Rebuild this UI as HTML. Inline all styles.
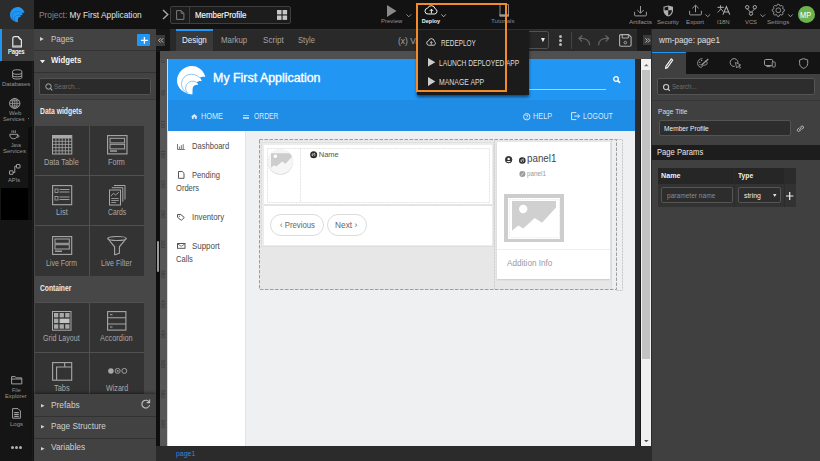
<!DOCTYPE html>
<html><head><meta charset="utf-8">
<style>
*{box-sizing:border-box;margin:0;padding:0}
html,body{width:820px;height:461px;overflow:hidden;background:#121212;font-family:"Liberation Sans",sans-serif;position:relative}
.a{position:absolute}
.t{position:absolute;white-space:nowrap;line-height:1;transform-origin:0 0}
svg{position:absolute;overflow:visible}
</style></head><body>
<div class="a" style="left:0px;top:0px;width:820px;height:29px;background:#121212;"></div>
<div class="a" style="left:0px;top:0px;width:34px;height:29px;background:#2c2c2c;"></div>
<svg style="left:9.5px;top:6.75px;" width="14.5" height="15.25"><g transform="scale(0.512,0.535)"><path d="M15.4 28.5 C7 28 0 22 0 15 C0 7 6.5 0 15 0 C21.5 0 27 5 28.3 10.9 C26 10.3 23.8 10.8 22.8 11.7 C23.8 12.6 24.5 13.8 24.8 15.2 C23 14.6 20.8 15.2 19.7 16.4 C20.4 17 21 17.8 21.25 18.75 C18.5 18.4 16.3 19.6 15.8 21.5 C15.4 23.5 15.6 26 15.4 28.5 Z" fill="#2196f3"/><path d="M22.8 11.7 C16 5 6 8 4.5 16 C4 21 6.5 25 10.3 27.3 M19.7 16.4 C15 13 9.5 16 8.5 21 C8.2 24 9.5 26 10.7 27" stroke="#1565c0" stroke-width="1.2" fill="none" opacity=".8"/></g></svg>
<div class="t" style="left:39.28px;top:11px;font-size:8.80px;color:#888;transform:scaleX(0.946);">Project: <span style="color:#e2e2e2">My First Application</span></div>
<svg style="left:162px;top:9px;" width="7" height="11"><path d="M1 1 L5.8 5.5 L1 10" stroke="#a8a8a8" stroke-width="1.4" fill="none"/></svg>
<div class="a" style="left:170.3px;top:6.3px;width:120.7px;height:17.6px;background:#1c1c1c;border:1px solid #3f3f3f;border-radius:2px"></div>
<div class="a" style="left:189.4px;top:6.8px;width:1px;height:16.6px;background:#3f3f3f;"></div>
<svg style="left:176.2px;top:9.9px;" width="8.5" height="10"><path d="M0.6 0.6 H5.2 L7.9 3.3 V9.4 H0.6 Z M5.2 0.6 V3.3 H7.9" stroke="#7a7a7a" stroke-width="1" fill="none"/></svg>
<div class="t" style="left:195.11px;top:11px;font-size:8.80px;color:#f4f4f4;transform:scaleX(0.897);-webkit-text-stroke:0.15px #fff;">MemberProfile</div>
<svg style="left:276.6px;top:10.2px;" width="10.2" height="10"><rect x="0" y="0" width="4.5" height="4.4" fill="#c8c8c8"/><rect x="5.6" y="0" width="4.5" height="4.4" fill="#c8c8c8"/><rect x="0" y="5.5" width="4.5" height="4.4" fill="#c8c8c8"/><rect x="5.6" y="5.5" width="4.5" height="4.4" fill="#c8c8c8"/></svg>
<svg style="left:386.7px;top:4.6px;" width="9.5" height="12"><path d="M0 0 L9.5 6 L0 12 Z" fill="#8a8a8a"/></svg>
<div class="t" style="left:380.70px;top:19px;font-size:5.50px;color:#929292;transform:scaleX(1.089);">Preview</div>
<svg style="left:406px;top:14.2px;" width="5.6" height="3.2"><path d="M0.4 0.4 L2.8 2.8 L5.2 0.4" stroke="#9a9a9a" stroke-width="0.9" fill="none"/></svg>
<svg style="left:424.9px;top:5.3px;" width="12.8" height="9.5" viewBox="0 0 12.8 9.5"><path d="M3.2 9 H9.8 A2.7 2.7 0 0 0 10.2 3.8 A4 4 0 0 0 2.6 3.2 A2.9 2.9 0 0 0 3.2 9 Z" stroke="#f2f2f2" stroke-width="1" fill="none"/><path d="M6.4 8.3 V4.3 M4.8 5.9 L6.4 4.2 L8 5.9" stroke="#f2f2f2" stroke-width="1" fill="none"/></svg>
<div class="t" style="left:421.83px;top:19px;font-size:5.50px;color:#f4f4f4;font-weight:bold;">Deploy</div>
<svg style="left:440.5px;top:14.2px;" width="5.2" height="3.2"><path d="M0.4 0.4 L2.6 2.8 L4.8 0.4" stroke="#bbb" stroke-width="0.9" fill="none"/></svg>
<svg style="left:498.7px;top:3.9px;" width="10" height="12.5"><path d="M1 0.5 H9.5 V12 H1 Z" stroke="#8a8a8a" stroke-width="1" fill="none"/><rect x="0.5" y="10.3" width="9.5" height="2.2" fill="#9a9a9a"/></svg>
<div class="t" style="left:491.39px;top:19px;font-size:5.50px;color:#858585;transform:scaleX(1.130);">Tutorials</div>
<svg style="left:634px;top:5.5px;" width="13" height="10.5"><path d="M6.5 0 V7 M3.3 4 L6.5 7.2 L9.7 4" stroke="#999" stroke-width="1" fill="none"/><path d="M0.6 5.8 V9 Q0.6 9.9 1.5 9.9 H11.5 Q12.4 9.9 12.4 9 V5.8" stroke="#999" stroke-width="1" fill="none"/></svg>
<div class="t" style="left:628.68px;top:20px;font-size:5.50px;color:#959595;transform:scaleX(1.158);">Artifacts</div>
<svg style="left:663px;top:4.5px;" width="10.5" height="12"><path d="M5.25 0.5 L10 1.8 V5.5 C10 8.5 8 10.6 5.25 11.6 C2.5 10.6 0.5 8.5 0.5 5.5 V1.8 Z" fill="#b0b0b0"/><path d="M5.25 1.6 V5.3 H1.5 V2.5 Z M5.25 5.3 H9 C8.8 7.9 7.3 9.6 5.25 10.5 Z" fill="#151515"/></svg>
<div class="t" style="left:656.90px;top:20px;font-size:5.50px;color:#959595;transform:scaleX(1.102);">Security</div>
<svg style="left:689px;top:5.3px;" width="13" height="10.5"><path d="M6.5 7.2 V0.3 M3.3 3.3 L6.5 0.2 L9.7 3.3" stroke="#999" stroke-width="1" fill="none"/><path d="M0.6 5.8 V9 Q0.6 9.9 1.5 9.9 H11.5 Q12.4 9.9 12.4 9 V5.8" stroke="#999" stroke-width="1" fill="none"/></svg>
<div class="t" style="left:686.49px;top:20px;font-size:5.50px;color:#959595;transform:scaleX(1.132);">Export</div>
<svg style="left:704.5px;top:14px;" width="5.5" height="3"><path d="M0.4 0.4 L2.75 2.7 L5.1 0.4" stroke="#a0a0a0" stroke-width="0.9" fill="none"/></svg>
<svg style="left:716.7px;top:5px;" width="13.5" height="10"><path d="M0.5 2.3 H6.8 M3.6 0.3 V3.5 C3.3 5 2 6.5 0.6 7.3 M3.8 3.8 C4.5 5 5.3 5.8 6.3 6.5" stroke="#b0b0b0" stroke-width="1" fill="none"/><path d="M5.9 9.6 L9.4 1.6 L12.8 9.6 M7 7 H11.8" stroke="#b0b0b0" stroke-width="1.1" fill="none"/></svg>
<div class="t" style="left:717.10px;top:20px;font-size:5.50px;color:#959595;transform:scaleX(1.093);">I18N</div>
<svg style="left:745px;top:4.7px;" width="12" height="10.7"><circle cx="2.2" cy="2.2" r="1.7" stroke="#aaa" stroke-width="1" fill="none"/><circle cx="9.8" cy="2.2" r="1.7" stroke="#aaa" stroke-width="1" fill="none"/><circle cx="6" cy="8.6" r="1.7" stroke="#aaa" stroke-width="1" fill="none"/><path d="M2.6 3.9 C3 5.5 4.5 6 5.5 7 M9.4 3.9 C9 5.5 7.5 6 6.5 7" stroke="#aaa" stroke-width="1" fill="none"/></svg>
<div class="t" style="left:744.71px;top:20px;font-size:5.50px;color:#959595;transform:scaleX(1.061);">VCS</div>
<svg style="left:760px;top:13.5px;" width="5.5" height="3.2"><path d="M0.4 0.4 L2.75 2.8 L5.1 0.4" stroke="#a0a0a0" stroke-width="0.9" fill="none"/></svg>
<svg style="left:772.2px;top:4.1px;" width="12.6" height="12.6" viewBox="0 0 12.6 12.6"><path d="M10.55 4.55 L12.35 5.51 L12.35 7.09 L10.55 8.05 L10.55 8.07 L11.14 10.02 L10.02 11.14 L8.07 10.55 L8.05 10.55 L7.09 12.35 L5.51 12.35 L4.55 10.55 L4.53 10.55 L2.58 11.14 L1.46 10.02 L2.05 8.07 L2.05 8.05 L0.25 7.09 L0.25 5.51 L2.05 4.55 L2.05 4.53 L1.46 2.58 L2.58 1.46 L4.53 2.05 L4.55 2.05 L5.51 0.25 L7.09 0.25 L8.05 2.05 L8.07 2.05 L10.02 1.46 L11.14 2.58 L10.55 4.53 Z" stroke="#a0a0a0" stroke-width="0.85" fill="none" stroke-linejoin="round"/><circle cx="6.3" cy="6.3" r="2.4" stroke="#a0a0a0" stroke-width="0.85" fill="none"/></svg>
<div class="t" style="left:767.39px;top:20px;font-size:5.50px;color:#959595;transform:scaleX(1.117);">Settings</div>
<svg style="left:787.6px;top:13.5px;" width="5" height="3.2"><path d="M0.4 0.4 L2.5 2.8 L4.6 0.4" stroke="#a0a0a0" stroke-width="0.9" fill="none"/></svg>
<div class="a" style="left:798.2px;top:6.4px;width:16.9px;height:16.6px;background:#6db24d;border-radius:50%"></div>
<div class="t" style="left:800.43px;top:11px;font-size:8.80px;color:#ffffff;transform:scaleX(0.848);">MP</div>
<div class="a" style="left:0px;top:29px;width:33.5px;height:432px;background:#151515;"></div>
<div class="a" style="left:31.8px;top:61px;width:1.7px;height:400px;background:#1e1e1e;"></div>
<div class="a" style="left:28px;top:127px;width:3.8px;height:93px;background:#0c0c0c;"></div>
<div class="a" style="left:0.5px;top:188px;width:27.5px;height:32px;background:#000;"></div>
<div class="a" style="left:0px;top:29px;width:33.5px;height:32px;background:#3b3b3b;"></div>
<div class="a" style="left:0px;top:29px;width:1.6px;height:32px;background:#2196f3;"></div>
<svg style="left:11.9px;top:36px;" width="10.2" height="11.6"><path d="M0.8 2.6 Q0.8 0.7 2.6 0.7 H6.2 L9.4 3.9 V10.8 H0.8 Z" stroke="#e6e6e6" stroke-width="1.2" fill="none"/><path d="M6.3 0.8 Q6.6 3.6 9.3 3.9" stroke="#e6e6e6" stroke-width="1" fill="none"/><rect x="1.3" y="9.3" width="7.6" height="1.9" fill="#b8b8b8"/></svg>
<div class="t" style="left:8.41px;top:48px;font-size:7.50px;color:#ffffff;transform:scaleX(0.766);-webkit-text-stroke:0.2px #fff;">Pages</div>
<svg style="left:11.8px;top:68.6px;" width="10.4" height="10.8"><path d="M0.6 2.2 C0.6 0.3 9.8 0.3 9.8 2.2 V8.6 C9.8 10.5 0.6 10.5 0.6 8.6 Z M0.6 4.5 C2 5.6 8.4 5.6 9.8 4.5 M0.6 7 C2 8.1 8.4 8.1 9.8 7" stroke="#a0a0a0" stroke-width="1" fill="none"/></svg>
<div class="t" style="left:2.31px;top:82px;font-size:5.50px;color:#959595;transform:scaleX(1.072);">Databases</div>
<svg style="left:9.3px;top:98px;" width="11.5" height="10.8"><ellipse cx="5.75" cy="5.4" rx="5.2" ry="4.9" stroke="#a0a0a0" stroke-width="1" fill="none"/><ellipse cx="5.75" cy="5.4" rx="2.3" ry="4.9" stroke="#a0a0a0" stroke-width="0.9" fill="none"/><path d="M0.6 5.4 H10.9 M1.3 2.8 H10.2 M1.3 8 H10.2 M5.75 0.5 V10.3" stroke="#a0a0a0" stroke-width="0.8" fill="none"/></svg>
<div class="t" style="left:8.60px;top:111px;font-size:5.50px;color:#959595;transform:scaleX(1.097);">Web</div>
<div class="t" style="left:3.32px;top:117px;font-size:5.50px;color:#959595;transform:scaleX(1.019);">Services</div>
<div class="a" style="left:28.3px;top:117.6px;width:1px;height:1px;background:#777;"></div>
<svg style="left:9.3px;top:129.7px;" width="10.8" height="9.3"><path d="M0.8 4.3 H8.6 C8.6 7.3 7 8.8 4.7 8.8 C2.4 8.8 0.8 7.3 0.8 4.3 Z M8.4 5 C10.6 5 10.6 7.5 8 7.3" stroke="#a0a0a0" stroke-width="1" fill="none"/><path d="M3 0.3 V3 M4.7 0.3 V3 M6.4 0.3 V3" stroke="#a0a0a0" stroke-width="0.8" fill="none"/></svg>
<div class="t" style="left:11.26px;top:143px;font-size:5.50px;color:#959595;transform:scaleX(0.861);">Java</div>
<div class="t" style="left:3.30px;top:149px;font-size:5.50px;color:#959595;transform:scaleX(1.086);">Services</div>
<svg style="left:9.3px;top:164.2px;" width="11.5" height="10.8"><rect x="7.5" y="0.5" width="3.5" height="3.5" rx="0.3" stroke="#a0a0a0" stroke-width="1" fill="none"/><rect x="0.5" y="6.8" width="3.5" height="3.5" rx="0.3" stroke="#a0a0a0" stroke-width="1" fill="none"/><path d="M4 8.5 H5.8 V2.2 H7.5" stroke="#a0a0a0" stroke-width="1" fill="none"/></svg>
<div class="t" style="left:8.31px;top:178px;font-size:5.50px;color:#959595;transform:scaleX(1.050);">APIs</div>
<svg style="left:10.8px;top:375.5px;" width="11.4" height="8.5"><path d="M0.6 0.6 H4.2 L5.3 1.9 H10.8 V7.9 H0.6 Z M0.6 3 H10.8" stroke="#a0a0a0" stroke-width="1" fill="none"/></svg>
<div class="t" style="left:11.93px;top:388px;font-size:5.50px;color:#959595;transform:scaleX(0.970);">File</div>
<div class="t" style="left:5.41px;top:394px;font-size:5.50px;color:#959595;transform:scaleX(1.055);">Explorer</div>
<svg style="left:12.2px;top:408px;" width="9" height="10.8"><path d="M0.6 0.6 H6 L8.4 3 V10.2 H0.6 Z" stroke="#a0a0a0" stroke-width="1" fill="none"/><path d="M2.2 4.6 H6.8 M2.2 6.5 H6.8 M2.2 8.4 H6.8" stroke="#a0a0a0" stroke-width="1.1"/></svg>
<div class="t" style="left:9.70px;top:422px;font-size:5.50px;color:#959595;transform:scaleX(1.090);">Logs</div>
<div class="a" style="left:11.3px;top:445.8px;width:3.1px;height:3.1px;background:#b0b0b0;border-radius:50%"></div>
<div class="a" style="left:15.3px;top:445.8px;width:3.1px;height:3.1px;background:#b0b0b0;border-radius:50%"></div>
<div class="a" style="left:19.3px;top:445.8px;width:3.1px;height:3.1px;background:#b0b0b0;border-radius:50%"></div>
<div class="a" style="left:33.5px;top:29px;width:122.5px;height:432px;background:#424242;"></div>
<div class="a" style="left:33.5px;top:49.6px;width:122.5px;height:1px;background:#323232;"></div>
<div class="a" style="left:33.5px;top:71.6px;width:122.5px;height:1px;background:#323232;"></div>
<svg style="left:40.3px;top:37.4px;" width="4" height="4"><path d="M0 0 L3.8 2 L0 4 Z" fill="#d0d0d0"/></svg>
<div class="t" style="left:51.20px;top:35px;font-size:8.80px;color:#c8c8c8;transform:scaleX(0.906);">Pages</div>
<div class="a" style="left:137.1px;top:33.6px;width:13.1px;height:12.4px;background:#2196f3;border-radius:1px"></div>
<svg style="left:140.5px;top:36.7px;" width="6.8" height="6.8"><path d="M3.4 0 V6.8 M0 3.4 H6.8" stroke="#fff" stroke-width="1.3"/></svg>
<svg style="left:40px;top:60px;" width="5" height="3.2"><path d="M0 0 H5 L2.5 3.2 Z" fill="#f0f0f0"/></svg>
<div class="t" style="left:50.81px;top:56px;font-size:8.80px;color:#f4f4f4;font-weight:bold;transform:scaleX(0.887);">Widgets</div>
<div class="a" style="left:39px;top:78.2px;width:112px;height:16.4px;background:#2b2b2b;border:1px solid #525252;border-radius:2px"></div>
<svg style="left:45.2px;top:82.6px;" width="8" height="8"><circle cx="3.5" cy="3.5" r="2.7" stroke="#b0b0b0" stroke-width="1" fill="none"/><path d="M5.4 5.4 L7.3 7.3" stroke="#b0b0b0" stroke-width="1.1"/></svg>
<div class="t" style="left:54.28px;top:83px;font-size:7.50px;color:#6e6e6e;transform:scaleX(0.866);">Search...</div>
<div class="a" style="left:33.5px;top:98.5px;width:122.5px;height:295px;background:#474747;"></div>
<div class="a" style="left:33.5px;top:98.5px;width:122.5px;height:0.8px;background:#383838;"></div>
<div class="t" style="left:39.86px;top:107px;font-size:8.80px;color:#ececec;font-weight:bold;transform:scaleX(0.774);">Data widgets</div>
<div class="t" style="left:40.06px;top:284px;font-size:8.80px;color:#ececec;font-weight:bold;transform:scaleX(0.762);">Container</div>
<div class="a" style="left:34.8px;top:125.6px;width:109.4px;height:150.5px;background:#505050;"></div>
<div class="a" style="left:35px;top:126px;width:54.2px;height:49.4px;background:#333333;"></div>
<div class="a" style="left:90px;top:126px;width:54.2px;height:49.4px;background:#333333;"></div>
<div class="a" style="left:35px;top:176.4px;width:54.2px;height:49px;background:#333333;"></div>
<div class="a" style="left:90px;top:176.4px;width:54.2px;height:49px;background:#333333;"></div>
<div class="a" style="left:35px;top:226.4px;width:54.2px;height:49.5px;background:#333333;"></div>
<div class="a" style="left:90px;top:226.4px;width:54.2px;height:49.5px;background:#333333;"></div>
<div class="a" style="left:34.8px;top:302px;width:109.4px;height:91.5px;background:#505050;"></div>
<div class="a" style="left:35px;top:302.5px;width:54.2px;height:49.6px;background:#333333;"></div>
<div class="a" style="left:90px;top:302.5px;width:54.2px;height:49.6px;background:#333333;"></div>
<div class="a" style="left:35px;top:353px;width:54.2px;height:40.5px;background:#333333;"></div>
<div class="a" style="left:90px;top:353px;width:54.2px;height:40.5px;background:#333333;"></div>
<svg style="left:52px;top:134.5px;" width="20.3" height="19.5"><rect x="0.5" y="0.5" width="19.3" height="18.5" stroke="#a8a8a8" stroke-width="1" fill="none"/><rect x="0.5" y="0.5" width="19.3" height="3" fill="#a8a8a8"/><path d="M3.9 3 V19 M7.1 3 V19 M10.2 3 V19 M13.4 3 V19 M16.6 3 V19 M0.5 6.3 H19.8 M0.5 9.4 H19.8 M0.5 12.6 H19.8 M0.5 15.8 H19.8" stroke="#a8a8a8" stroke-width="0.8"/></svg>
<div class="t" style="left:44.34px;top:158px;font-size:8.80px;color:#a8a8a8;transform:scaleX(0.828);">Data Table</div>
<svg style="left:106.7px;top:134.5px;" width="20.6" height="19.5"><rect x="0.6" y="0.6" width="19.4" height="18.3" stroke="#a8a8a8" stroke-width="1.1" fill="none"/><rect x="3" y="3.3" width="14.6" height="4.6" stroke="#a8a8a8" stroke-width="1" fill="none"/><rect x="3" y="9.3" width="14.6" height="4.6" stroke="#a8a8a8" stroke-width="1" fill="none"/><rect x="3" y="15.3" width="7" height="1.4" fill="#a8a8a8"/></svg>
<div class="t" style="left:108.04px;top:158px;font-size:8.80px;color:#a8a8a8;transform:scaleX(0.823);">Form</div>
<svg style="left:52px;top:184.7px;" width="20.3" height="20.3"><rect x="0.6" y="0.6" width="19.1" height="19.1" stroke="#a8a8a8" stroke-width="1.1" fill="none"/><rect x="3" y="4" width="3" height="3.5" stroke="#a8a8a8" stroke-width="0.8" fill="none"/><rect x="3" y="11.5" width="3" height="3.5" stroke="#a8a8a8" stroke-width="0.8" fill="none"/><path d="M7.5 4.5 H17.5 M7.5 7 H17.5 M7.5 12 H17.5 M7.5 14.5 H17.5" stroke="#a8a8a8" stroke-width="0.9"/></svg>
<div class="t" style="left:55.82px;top:208px;font-size:8.80px;color:#a8a8a8;transform:scaleX(0.862);">List</div>
<svg style="left:109px;top:184.7px;" width="16.5" height="20.5"><path d="M5 0.5 H16 V14.5" stroke="#a8a8a8" stroke-width="1" fill="none"/><path d="M2.8 2.7 H13.8 V16.7" stroke="#a8a8a8" stroke-width="1" fill="none"/><rect x="0.5" y="5" width="11" height="15" stroke="#a8a8a8" stroke-width="1" fill="none"/><path d="M2 11 L4.5 8.3 L6.5 10 L9.8 7.3" stroke="#a8a8a8" stroke-width="0.9" fill="none"/><path d="M2.3 13.5 H9.7 M2.3 15.5 H9.7 M2.3 17.5 H7" stroke="#a8a8a8" stroke-width="0.8"/></svg>
<div class="t" style="left:107.76px;top:208px;font-size:8.80px;color:#a8a8a8;transform:scaleX(0.780);">Cards</div>
<svg style="left:52px;top:235.7px;" width="20.3" height="19"><rect x="0.6" y="0.6" width="19.1" height="17.8" stroke="#a8a8a8" stroke-width="1.1" fill="none"/><rect x="3" y="3" width="14.3" height="4.3" stroke="#a8a8a8" stroke-width="1" fill="none"/><rect x="3" y="8.7" width="14.3" height="4.3" stroke="#a8a8a8" stroke-width="1" fill="none"/><rect x="3" y="14.5" width="7" height="1.4" fill="#a8a8a8"/></svg>
<div class="t" style="left:46.05px;top:259px;font-size:8.80px;color:#a8a8a8;transform:scaleX(0.792);">Live Form</div>
<svg style="left:107px;top:235.7px;" width="20" height="19.3"><ellipse cx="10" cy="2.5" rx="9.3" ry="2" stroke="#a8a8a8" stroke-width="1.1" fill="none"/><path d="M0.7 2.5 L7.6 10.8 V18.6 C9 18.8 10 18.3 12.4 17.2 V10.8 L19.3 2.5" stroke="#a8a8a8" stroke-width="1.1" fill="none"/></svg>
<div class="t" style="left:100.94px;top:259px;font-size:8.80px;color:#a8a8a8;transform:scaleX(0.807);">Live Filter</div>
<svg style="left:52.2px;top:311px;" width="19.5" height="19.7"><rect x="0.5" y="0.5" width="18.5" height="18.7" stroke="#a8a8a8" stroke-width="1" fill="none"/><rect x="2" y="2" width="4.3" height="4.4" fill="#a8a8a8"/><rect x="7.6" y="2" width="4.3" height="4.4" fill="#a8a8a8"/><rect x="13.2" y="2" width="4.3" height="4.4" fill="#a8a8a8"/><rect x="2" y="7.65" width="4.3" height="4.4" fill="#a8a8a8"/><rect x="7.6" y="7.65" width="9.9" height="4.4" fill="#c4c4c4"/><rect x="2" y="13.3" width="4.3" height="4.4" fill="#a8a8a8"/><rect x="7.6" y="13.3" width="4.3" height="4.4" fill="#a8a8a8"/><rect x="13.2" y="13.3" width="4.3" height="4.4" fill="#a8a8a8"/></svg>
<div class="t" style="left:43.15px;top:334px;font-size:8.80px;color:#a8a8a8;transform:scaleX(0.807);">Grid Layout</div>
<svg style="left:107px;top:311px;" width="19.5" height="19.7"><rect x="0.6" y="0.6" width="18.3" height="18.5" stroke="#a8a8a8" stroke-width="1.1" fill="none"/><path d="M0.6 6.8 H18.9 M0.6 13 H18.9" stroke="#a8a8a8" stroke-width="1.1"/><path d="M3 3.7 H5.5 M3 16 H5.5" stroke="#a8a8a8" stroke-width="1"/></svg>
<div class="t" style="left:100.13px;top:334px;font-size:8.80px;color:#a8a8a8;transform:scaleX(0.836);">Accordion</div>
<svg style="left:51.7px;top:362px;" width="20.3" height="18.8"><rect x="0.6" y="0.6" width="19.1" height="17.6" stroke="#a8a8a8" stroke-width="1.1" fill="none"/><path d="M4.6 18 V5 H19.7 M12.7 0.6 V5" stroke="#a8a8a8" stroke-width="1.1" fill="none"/></svg>
<div class="t" style="left:53.63px;top:384px;font-size:8.80px;color:#a8a8a8;transform:scaleX(0.845);">Tabs</div>
<svg style="left:107.5px;top:368px;" width="19.3" height="5.8"><circle cx="2.9" cy="2.9" r="2.75" fill="#a8a8a8"/><circle cx="9.65" cy="2.9" r="2.5" stroke="#a8a8a8" stroke-width="0.9" fill="none"/><circle cx="9.65" cy="2.9" r="0.9" fill="#a8a8a8"/><circle cx="16.3" cy="2.9" r="2.5" stroke="#a8a8a8" stroke-width="0.9" fill="none"/></svg>
<div class="t" style="left:105.64px;top:384px;font-size:8.80px;color:#a8a8a8;transform:scaleX(0.811);">Wizard</div>
<div class="a" style="left:33.5px;top:393.5px;width:122.5px;height:67.5px;background:#424242;box-shadow:0 -1px 3px rgba(0,0,0,.45)"></div>
<div class="a" style="left:33.5px;top:415.5px;width:122.5px;height:1px;background:#323232;"></div>
<div class="a" style="left:33.5px;top:437.8px;width:122.5px;height:1px;background:#323232;"></div>
<svg style="left:40.9px;top:403.8px;" width="3.6" height="3.4"><path d="M0 0 L3.6 1.7 L0 3.4 Z" fill="#d0d0d0"/></svg>
<svg style="left:40.9px;top:425.3px;" width="3.6" height="3.4"><path d="M0 0 L3.6 1.7 L0 3.4 Z" fill="#d0d0d0"/></svg>
<svg style="left:40.9px;top:447px;" width="3.6" height="3.4"><path d="M0 0 L3.6 1.7 L0 3.4 Z" fill="#d0d0d0"/></svg>
<div class="t" style="left:51.28px;top:401px;font-size:8.80px;color:#d0d0d0;transform:scaleX(0.950);">Prefabs</div>
<svg style="left:141px;top:399px;" width="9.5" height="9.5"><path d="M8.3 3.4 A3.9 3.9 0 1 0 8.6 6" stroke="#c0c0c0" stroke-width="1.1" fill="none"/><path d="M8.6 0.6 V3.6 H5.7" stroke="#c0c0c0" stroke-width="1.1" fill="none"/></svg>
<div class="t" style="left:51.29px;top:422px;font-size:8.80px;color:#d0d0d0;transform:scaleX(0.934);">Page Structure</div>
<div class="t" style="left:51.28px;top:443px;font-size:8.80px;color:#d0d0d0;transform:scaleX(0.946);">Variables</div>
<div class="a" style="left:156px;top:29px;width:496.5px;height:432px;background:#1c1c1c;"></div>
<div class="a" style="left:156px;top:51px;width:4px;height:395px;background:#0e0e0e;"></div>
<div class="a" style="left:156.9px;top:241px;width:2.4px;height:31px;background:#9a9a9a;border-radius:1px"></div>
<div class="a" style="left:156px;top:29px;width:14px;height:22.5px;background:#161616;"></div>
<div class="a" style="left:156.3px;top:34.8px;width:8.9px;height:11.3px;background:#3a3a3a;"></div>
<svg style="left:157.6px;top:38.2px;" width="5.4" height="4.8"><path d="M2.5 0.3 L0.5 2.4 L2.5 4.5 M5.1 0.3 L3.1 2.4 L5.1 4.5" stroke="#c8c8c8" stroke-width="0.9" fill="none"/></svg>
<div class="a" style="left:170px;top:29px;width:467px;height:21.5px;background:#292929;"></div>
<div class="a" style="left:170px;top:29px;width:467px;height:1px;background:#313131;"></div>
<div class="a" style="left:176.4px;top:29px;width:37px;height:21.5px;background:#393939;"></div>
<div class="a" style="left:176.4px;top:29px;width:37px;height:1.6px;background:#2196f3;"></div>
<div class="t" style="left:182.40px;top:36px;font-size:8.80px;color:#f2f2f2;transform:scaleX(0.905);">Design</div>
<div class="t" style="left:221.41px;top:36px;font-size:8.80px;color:#a4a4a4;transform:scaleX(0.893);">Markup</div>
<div class="t" style="left:262.60px;top:36px;font-size:8.80px;color:#a4a4a4;transform:scaleX(0.920);">Script</div>
<div class="t" style="left:298.12px;top:36px;font-size:8.80px;color:#a4a4a4;transform:scaleX(0.864);">Style</div>
<div class="t" style="left:397.78px;top:37px;font-size:8.80px;color:#a4a4a4;transform:scaleX(0.960);">(x) Variables</div>
<div class="a" style="left:445px;top:31.2px;width:103.9px;height:17.9px;background:#282828;border:1px solid #525252;border-radius:2.5px"></div>
<svg style="left:540.7px;top:37.8px;" width="3.9" height="4.3"><path d="M0 0 H3.9 L1.95 4.3 Z" fill="#eee"/></svg>
<div class="a" style="left:558.7px;top:34.5px;width:3px;height:3px;background:#b8b8b8;border-radius:50%"></div>
<div class="a" style="left:558.7px;top:38.9px;width:3px;height:3px;background:#b8b8b8;border-radius:50%"></div>
<div class="a" style="left:558.7px;top:43px;width:3px;height:3px;background:#b8b8b8;border-radius:50%"></div>
<div class="a" style="left:571.2px;top:32.2px;width:1px;height:17px;background:#444;"></div>
<svg style="left:576.7px;top:35.3px;" width="13.3" height="10.2"><path d="M12.6 10.2 C12.6 5.5 9.5 3 2.5 3.4 M5.3 0.5 L2 3.4 L5 6.6" stroke="#666" stroke-width="1.2" fill="none"/></svg>
<svg style="left:598.3px;top:35.3px;" width="12.7" height="10.2"><path d="M0.6 10.2 C0.6 5.5 3.7 3 10.2 3.4 M7.4 0.5 L10.7 3.4 L7.7 6.6" stroke="#666" stroke-width="1.2" fill="none"/></svg>
<svg style="left:619.2px;top:34px;" width="12.7" height="12.8"><path d="M0.6 1.8 Q0.6 0.6 1.8 0.6 H9.6 L12.1 3.1 V11 Q12.1 12.2 10.9 12.2 H1.8 Q0.6 12.2 0.6 11 Z" stroke="#b0b0b0" stroke-width="1.1" fill="none"/><path d="M3.2 0.6 V4 H9.3 V0.6" stroke="#b0b0b0" stroke-width="1" fill="none"/><circle cx="6.35" cy="8.6" r="1.3" stroke="#b0b0b0" stroke-width="0.9" fill="none"/></svg>
<div class="a" style="left:637px;top:29px;width:15.8px;height:22px;background:#1b1b1b;"></div>
<div class="a" style="left:643px;top:34.7px;width:8px;height:10.8px;background:#3a3a3a;"></div>
<svg style="left:644.6px;top:37.8px;" width="5" height="4.8"><path d="M0.4 0.3 L2.3 2.4 L0.4 4.5 M2.9 0.3 L4.8 2.4 L2.9 4.5" stroke="#c8c8c8" stroke-width="0.9" fill="none"/></svg>
<div class="a" style="left:159.7px;top:51.2px;width:492.8px;height:8px;background:#4f4f4f;"></div>
<div class="a" style="left:160px;top:59px;width:6.8px;height:387px;background:#575757;"></div>
<div class="t" style="left:164px;top:60.2px;font-size:4.8px;color:#333;transform:rotate(90deg);transform-origin:0 0">0</div>
<div class="t" style="left:164px;top:90.2px;font-size:4.8px;color:#333;transform:rotate(90deg);transform-origin:0 0">50</div>
<div class="t" style="left:164px;top:120.2px;font-size:4.8px;color:#333;transform:rotate(90deg);transform-origin:0 0">100</div>
<div class="t" style="left:164px;top:150.2px;font-size:4.8px;color:#333;transform:rotate(90deg);transform-origin:0 0">150</div>
<div class="t" style="left:164px;top:180.2px;font-size:4.8px;color:#333;transform:rotate(90deg);transform-origin:0 0">200</div>
<div class="t" style="left:164px;top:210.2px;font-size:4.8px;color:#333;transform:rotate(90deg);transform-origin:0 0">250</div>
<div class="t" style="left:164px;top:240.2px;font-size:4.8px;color:#333;transform:rotate(90deg);transform-origin:0 0">300</div>
<div class="t" style="left:164px;top:270.2px;font-size:4.8px;color:#333;transform:rotate(90deg);transform-origin:0 0">350</div>
<div class="t" style="left:164px;top:300.2px;font-size:4.8px;color:#333;transform:rotate(90deg);transform-origin:0 0">400</div>
<div class="t" style="left:164px;top:330.2px;font-size:4.8px;color:#333;transform:rotate(90deg);transform-origin:0 0">450</div>
<div class="t" style="left:164px;top:360.2px;font-size:4.8px;color:#333;transform:rotate(90deg);transform-origin:0 0">500</div>
<div class="t" style="left:164px;top:390.2px;font-size:4.8px;color:#333;transform:rotate(90deg);transform-origin:0 0">550</div>
<div class="t" style="left:164px;top:420.2px;font-size:4.8px;color:#333;transform:rotate(90deg);transform-origin:0 0">600</div>
<div class="a" style="left:635.3px;top:59px;width:5.2px;height:387px;background:#2c2c2c;"></div>
<div class="a" style="left:640.5px;top:59px;width:10.5px;height:387px;background:#f1f1f1;"></div>
<div class="a" style="left:650.8px;top:29px;width:1px;height:432px;background:#2a2a2a;"></div>
<div class="a" style="left:641.8px;top:70px;width:8.4px;height:289px;background:#c3c3c3;"></div>
<svg style="left:643.5px;top:63.6px;" width="4.6" height="2.3"><path d="M0 2.3 H4.6 L2.3 0 Z" fill="#707070"/></svg>
<svg style="left:643.5px;top:439.5px;" width="4.6" height="2.3"><path d="M0 0 H4.6 L2.3 2.3 Z" fill="#505050"/></svg>
<div class="a" style="left:166.8px;top:59.2px;width:468.5px;height:386.8px;background:#eff0f2;"></div>
<div class="a" style="left:166.8px;top:59.2px;width:1.2px;height:386.8px;background:#d9d9d9;"></div>
<div class="a" style="left:168px;top:59.2px;width:467.3px;height:40.6px;background:#2196f3;"></div>
<div class="a" style="left:168px;top:99.8px;width:467.3px;height:31.6px;background:#1f8ce6;"></div>
<div class="a" style="left:168px;top:131.4px;width:77.3px;height:314.6px;background:#ffffff;"></div>
<div class="a" style="left:245.3px;top:131.4px;width:1px;height:314.6px;background:#e3e3e3;"></div>
<svg style="left:177px;top:65.5px;" width="28.5" height="28.5"><path d="M15.4 28.5 C7 28 0 22 0 15 C0 7 6.5 0 15 0 C21.5 0 27 5 28.3 10.9 C26 10.3 23.8 10.8 22.8 11.7 C23.8 12.6 24.5 13.8 24.8 15.2 C23 14.6 20.8 15.2 19.7 16.4 C20.4 17 21 17.8 21.25 18.75 C18.5 18.4 16.3 19.6 15.8 21.5 C15.4 23.5 15.6 26 15.4 28.5 Z" fill="#fff"/><path d="M22.8 11.7 C16 5.5 6 8 4.6 16.5 C4 21 6.5 25 10.3 27.3" stroke="#2196f3" stroke-width="0.7" fill="none" opacity=".75"/><path d="M19.7 16.4 C15 13.5 9.8 16 8.7 21 C8.3 24 9.5 26 10.8 27" stroke="#2196f3" stroke-width="0.7" fill="none" opacity=".75"/></svg>
<div class="t" style="left:213.08px;top:72px;font-size:12.40px;color:#ffffff;-webkit-text-stroke:0.35px #fff;">My First Application</div>
<svg style="left:612.8px;top:75.5px;" width="7.5" height="7"><circle cx="3" cy="3" r="2.3" stroke="#fff" stroke-width="1.3" fill="none"/><path d="M4.7 4.7 L7 6.8" stroke="#fff" stroke-width="1.8"/></svg>
<div class="a" style="left:460px;top:89.2px;width:146px;height:1.1px;background:#a9d4fb;"></div>
<svg style="left:190.6px;top:114px;" width="6.6" height="5"><path d="M3.3 0 L6.6 2.7 H5.7 V5 H4 V3.3 H2.6 V5 H0.9 V2.7 H0 Z" fill="#d6eafc"/></svg>
<div class="t" style="left:201.33px;top:112px;font-size:8.80px;color:#d6eafc;transform:scaleX(0.833);">HOME</div>
<div class="a" style="left:243px;top:114.6px;width:6.1px;height:1px;background:#a9d3fa;"></div>
<div class="a" style="left:243px;top:116.6px;width:6.1px;height:1px;background:#a9d3fa;"></div>
<div class="a" style="left:243px;top:118.3px;width:6.1px;height:1px;background:#a9d3fa;"></div>
<div class="t" style="left:253.66px;top:112px;font-size:8.80px;color:#d6eafc;transform:scaleX(0.771);">ORDER</div>
<svg style="left:523px;top:112.8px;" width="7.5" height="7.5"><circle cx="3.75" cy="3.75" r="3.2" stroke="#d6eafc" stroke-width="1" fill="none"/><path d="M2.6 3 C2.6 1.8 4.9 1.8 4.9 3 C4.9 3.8 3.75 3.8 3.75 4.6 M3.75 5.4 V6" stroke="#d6eafc" stroke-width="0.9" fill="none"/></svg>
<div class="t" style="left:533.23px;top:112px;font-size:8.80px;color:#d6eafc;transform:scaleX(0.831);">HELP</div>
<svg style="left:571px;top:112.3px;" width="9" height="8.2"><path d="M5.3 0.6 H0.6 V7.6 H5.3 M3.3 4.1 H8.6 M6.6 2.2 L8.6 4.1 L6.6 6" stroke="#d6eafc" stroke-width="1" fill="none"/></svg>
<div class="t" style="left:582.65px;top:112px;font-size:8.80px;color:#d6eafc;transform:scaleX(0.802);">LOGOUT</div>
<svg style="left:177.2px;top:143.5px;" width="7.8" height="5.8"><path d="M0.5 0 V5.5 H7.8 M2.4 2.6 V5 M4.3 1.2 V5 M6.2 0.2 V5" stroke="#777" stroke-width="1" fill="none"/></svg>
<div class="t" style="left:191.72px;top:142px;font-size:8.80px;color:#4a4a4a;transform:scaleX(0.862);">Dashboard</div>
<svg style="left:177.8px;top:171.4px;" width="6.5" height="7.8"><path d="M0.5 0.5 H4.2 L6 2.3 V7.3 H0.5 Z" stroke="#555" stroke-width="1" fill="none"/></svg>
<div class="t" style="left:191.72px;top:171px;font-size:8.80px;color:#4a4a4a;transform:scaleX(0.867);">Pending</div>
<div class="t" style="left:176.42px;top:184px;font-size:8.80px;color:#4a4a4a;transform:scaleX(0.859);">Orders</div>
<svg style="left:177px;top:213.5px;" width="7.8" height="6.5"><path d="M0.5 0.5 H3.8 L7.3 3.5 L4.3 6.3 L0.5 3.3 Z" stroke="#555" stroke-width="1" fill="none"/><circle cx="2.3" cy="2.2" r="0.6" fill="#555"/></svg>
<div class="t" style="left:191.51px;top:213px;font-size:8.80px;color:#4a4a4a;transform:scaleX(0.887);">Inventory</div>
<svg style="left:177px;top:243.1px;" width="8.5" height="5.8"><rect x="0.5" y="0.5" width="7.5" height="4.8" stroke="#555" stroke-width="1" fill="none"/><path d="M0.8 1 L4.25 3.3 L7.7 1" stroke="#555" stroke-width="0.8" fill="none"/></svg>
<div class="t" style="left:191.50px;top:242px;font-size:8.80px;color:#4a4a4a;transform:scaleX(0.902);">Support</div>
<div class="t" style="left:176.42px;top:255px;font-size:8.80px;color:#4a4a4a;transform:scaleX(0.864);">Calls</div>
<div class="a" style="left:259.5px;top:139.8px;width:363px;height:150.4px;background:#eff0f2;"></div>
<div class="a" style="left:259.5px;top:139.8px;width:357.3px;height:149.8px;background:#e6e7e6;"></div>
<svg style="left:616px;top:139px;" width="7" height="1"><path d="M0.5 0.5 L6.5 0.5" stroke="#c4c4c4" stroke-width="1" stroke-dasharray="2 1" fill="none"/></svg>
<svg style="left:622px;top:139px;" width="1" height="152"><path d="M0.5 0.5 L0.5 151.5" stroke="#c4c4c4" stroke-width="1" stroke-dasharray="2 1" fill="none"/></svg>
<svg style="left:616px;top:290px;" width="7" height="1"><path d="M0.5 0.5 L6.5 0.5" stroke="#c4c4c4" stroke-width="1" stroke-dasharray="2 1" fill="none"/></svg>
<div class="a" style="left:260.5px;top:140.8px;width:233.5px;height:105.2px;background:#ececec;"></div>
<svg style="left:261px;top:142px;" width="233" height="105"><rect x="0.5" y="0.5" width="232" height="104" stroke="#d9d9d9" stroke-width="1" stroke-dasharray="2 1" fill="none"/></svg>
<div class="a" style="left:264px;top:144.5px;width:227.5px;height:59.5px;background:#ffffff;"></div>
<svg style="left:267px;top:148px;" width="223" height="55"><rect x="0.5" y="0.5" width="222" height="54" stroke="#e3e3e3" stroke-width="1" stroke-dasharray="2 1" fill="none"/></svg>
<svg style="left:300px;top:148px;" width="1" height="55"><path d="M0.5 0.5 L0.5 54.5" stroke="#e3e3e3" stroke-width="1" stroke-dasharray="2 1" fill="none"/></svg>
<div class="a" style="left:264px;top:203.8px;width:227.5px;height:2.4px;background:#e4e4e4;"></div>
<div class="a" style="left:264px;top:206.2px;width:227.5px;height:38.8px;background:#ffffff;"></div>
<div class="a" style="left:268.2px;top:148.9px;width:25px;height:25px;border-radius:50%;background:#f6f6f6;box-shadow:0 0.6px 0.8px #cfcfcf;overflow:hidden"><svg style="left:3.1px;top:3.9px" width="21.4" height="15" viewBox="0 0 44 30"><path d="M0 0 H44 V6.4 L30 21.8 L22.7 17 L11.2 27.4 L6.3 24.6 L0 29.8 Z" fill="#cdcdcd"/><circle cx="9" cy="6.5" r="3.6" fill="#fff"/></svg></div>
<svg style="left:310.1px;top:150.9px;" width="7.3" height="7.3"><circle cx="3.65" cy="3.65" r="3.5" fill="#2a2a2a"/><path d="M4.8 1.8 L2 4.8 M2.6 2.4 C1.5 3.5 2.5 5 3.2 5.2 M4.3 5.2 C5.6 4 4.6 2.4 4 2.2" stroke="#eee" stroke-width="0.7" fill="none"/></svg>
<div class="t" style="left:318.73px;top:151px;font-size:7.50px;color:#555555;">Name</div>
<div class="a" style="left:270.2px;top:214px;width:53.6px;height:21.7px;border:1px solid #dcdcdc;border-radius:11px;background:#fff"></div>
<div class="t" style="left:280.11px;top:221px;font-size:8.80px;color:#666666;transform:scaleX(0.884);">&#8249; Previous</div>
<div class="a" style="left:327.4px;top:214px;width:40px;height:21.7px;border:1px solid #dcdcdc;border-radius:11px;background:#fff"></div>
<div class="t" style="left:335.08px;top:221px;font-size:8.80px;color:#666666;transform:scaleX(0.946);">Next &#8250;</div>
<svg style="left:494px;top:140px;" width="1" height="150"><path d="M0.5 0.5 L0.5 149.5" stroke="#cdcdcd" stroke-width="1" stroke-dasharray="2 1" fill="none"/></svg>
<svg style="left:611px;top:140px;" width="1" height="150"><path d="M0.5 0.5 L0.5 149.5" stroke="#d5d5d5" stroke-width="1" stroke-dasharray="2 1" fill="none"/></svg>
<div class="a" style="left:611.7px;top:140.5px;width:5px;height:149px;background:#eeeff0;"></div>
<div class="a" style="left:496.5px;top:141.6px;width:113.8px;height:137.4px;background:#fff;box-shadow:0 1px 1.5px rgba(0,0,0,.12)"></div>
<svg style="left:259px;top:139px;" width="358" height="151"><rect x="0.5" y="0.5" width="357" height="150" stroke="#9e9e9e" stroke-width="1" stroke-dasharray="3.5 1.5" fill="none"/></svg>
<svg style="left:504.75px;top:155.5px;" width="7.3" height="7.3"><circle cx="3.65" cy="3.65" r="3.2" stroke="#333" stroke-width="1" fill="#333"/><circle cx="3.65" cy="2.9" r="1.2" fill="#fff"/><path d="M1.6 5.9 C2 4.6 5.3 4.6 5.7 5.9 Z" fill="#fff"/></svg>
<svg style="left:519.2px;top:157px;" width="6.6" height="6.9"><circle cx="3.3" cy="3.45" r="3.3" fill="#2a2a2a"/><path d="M4.4 1.6 L1.9 4.9 M2.4 2.3 C1.4 3.3 2.2 4.9 3 5.2 M3.9 5.3 C5.2 4.2 4.6 2.3 3.8 2" stroke="#eee" stroke-width="0.7" fill="none"/></svg>
<div class="t" style="left:526.71px;top:153px;font-size:10.80px;color:#444444;transform:scaleX(0.906);">panel1</div>
<svg style="left:519.2px;top:170.5px;" width="6.8" height="6.2"><circle cx="3.4" cy="3.1" r="3" fill="#9a9a9a"/><path d="M4.4 1.7 L2.3 4.6" stroke="#fff" stroke-width="0.7"/></svg>
<div class="t" style="left:527.48px;top:170px;font-size:7.50px;color:#9a9a9a;transform:scaleX(0.844);">panel1</div>
<div class="a" style="left:504.25px;top:193.9px;width:59.85px;height:48.6px;background:#cdcdcd;"></div>
<div class="a" style="left:507.85px;top:197.5px;width:52.65px;height:41.4px;background:#ffffff;"></div>
<svg style="left:509px;top:199px;" width="51" height="39"><rect x="0.5" y="0.5" width="50" height="38" stroke="#ececec" stroke-width="1" stroke-dasharray="1.5 1" fill="none"/></svg>
<svg style="left:511.9px;top:201.2px;" width="44" height="29.8"><path d="M0 0 H44 V6.4 L30 21.8 L22.7 17 L11.2 27.4 L6.3 24.6 L0 29.8 Z" fill="#d0d0d0"/><circle cx="11.2" cy="8" r="4.2" fill="#fff"/></svg>
<div class="a" style="left:496.5px;top:249.2px;width:113.5px;height:1px;background:#eeeeee;"></div>
<div class="t" style="left:507.19px;top:259px;font-size:8.80px;color:#9a9a9a;transform:scaleX(0.928);">Addition Info</div>
<div class="a" style="left:156px;top:446px;width:496.5px;height:15px;background:#2b2b2b;"></div>
<div class="t" style="left:176.35px;top:450px;font-size:7.50px;color:#2a88e0;transform:scaleX(0.925);">page1</div>
<div class="a" style="left:651.7px;top:29px;width:168.3px;height:432px;background:#404040;"></div>
<div class="a" style="left:651.7px;top:29px;width:168.3px;height:22.8px;background:#3b3b3b;"></div>
<div class="t" style="left:658.69px;top:35px;font-size:9.60px;color:#e0e0e0;transform:scaleX(0.853);">wm-page: page1</div>
<div class="a" style="left:651.7px;top:51.8px;width:168.3px;height:22px;background:#141414;"></div>
<div class="a" style="left:651.7px;top:51.8px;width:34px;height:22px;background:#404040;"></div>
<div class="a" style="left:651.7px;top:51.5px;width:34px;height:1.3px;background:#2196f3;"></div>
<svg style="left:664.7px;top:57.5px;" width="8.4" height="11"><path d="M6.3 0.8 L7.7 2.2 L2.4 9.6 L0.6 10.4 L0.9 8.4 Z" stroke="#f0f0f0" stroke-width="1.2" fill="none" stroke-linejoin="round"/></svg>
<svg style="left:696.7px;top:58px;" width="12.1" height="9.9"><path d="M5.5 0.6 C2.6 0.6 0.6 2.8 0.6 5.3 C0.6 7.9 2.6 9.4 4.4 9.3 C5.4 9.2 5 8 5.6 7.5 C6.4 6.9 8.8 7.6 9.8 6.2 C10.6 5 9.8 3.5 9 2.5" stroke="#9a9a9a" stroke-width="0.9" fill="none"/><path d="M4.3 7.3 L11.3 0.9" stroke="#9a9a9a" stroke-width="1.3"/><circle cx="2.7" cy="4.4" r="0.7" fill="#9a9a9a"/><circle cx="4.6" cy="2.5" r="0.7" fill="#9a9a9a"/><circle cx="3" cy="6.6" r="0.6" fill="#9a9a9a"/></svg>
<svg style="left:730.2px;top:58px;" width="11.5" height="9.9"><path d="M7.8 5.6 A3.9 3.9 0 1 0 4.6 8.4" stroke="#9a9a9a" stroke-width="1" fill="none"/><path d="M5.3 4.4 L10.8 7 L8.6 7.8 L10.8 9.6 L9.9 10.2 L7.9 8.4 L6.7 10 Z" stroke="#9a9a9a" stroke-width="0.8" fill="none" stroke-linejoin="round"/></svg>
<svg style="left:763.8px;top:58.9px;" width="11.4" height="8.2"><rect x="0.5" y="0.5" width="8.2" height="6" rx="1.2" stroke="#9a9a9a" stroke-width="1" fill="none"/><path d="M2.5 7.6 H6.5" stroke="#9a9a9a" stroke-width="1"/><rect x="8.2" y="3" width="3" height="5" rx="0.5" stroke="#9a9a9a" stroke-width="0.9" fill="#141414"/></svg>
<svg style="left:798.8px;top:58px;" width="9.3" height="10.9"><path d="M4.65 0.6 L8.7 2 V5.5 C8.7 7.8 7 9.6 4.65 10.4 C2.3 9.6 0.6 7.8 0.6 5.5 V2 Z" stroke="#9a9a9a" stroke-width="1" fill="none"/></svg>
<div class="a" style="left:656.7px;top:78.4px;width:158.6px;height:17px;background:#2d2d2d;border:1px solid #545454;border-radius:2px"></div>
<svg style="left:662.6px;top:83.9px;" width="7.2" height="7.2"><circle cx="3.1" cy="3.1" r="2.6" stroke="#c8c8c8" stroke-width="1.1" fill="none"/><path d="M5 5 L6.8 6.8" stroke="#c8c8c8" stroke-width="1.2"/></svg>
<div class="t" style="left:672.39px;top:83px;font-size:7.50px;color:#6e6e6e;transform:scaleX(0.820);">Search...</div>
<div class="a" style="left:651.7px;top:99.6px;width:168.3px;height:1px;background:#363636;"></div>
<div class="t" style="left:657.67px;top:108px;font-size:7.50px;color:#dddddd;transform:scaleX(0.881);">Page Title</div>
<div class="a" style="left:658.5px;top:120.4px;width:132.3px;height:15.6px;background:#2d2d2d;border:1px solid #545454;border-radius:2px"></div>
<div class="t" style="left:664.17px;top:125px;font-size:7.50px;color:#eeeeee;transform:scaleX(0.881);">Member Profile</div>
<svg style="left:795.8px;top:125px;" width="8.8" height="7.4"><path d="M3.8 2.8 L5.3 1.3 C6.3 0.3 8.3 1.7 7.3 3 L5.8 4.5 M5 4.6 L3.5 6.1 C2.5 7.1 0.5 5.7 1.5 4.4 L3 2.9 M3.2 5 L5.6 2.6" stroke="#c0c0c0" stroke-width="1" fill="none"/></svg>
<div class="a" style="left:651.7px;top:144.8px;width:168.3px;height:15.4px;background:#1d1d1d;"></div>
<div class="t" style="left:657.42px;top:148px;font-size:8.80px;color:#e8e8e8;transform:scaleX(0.868);">Page Params</div>
<div class="a" style="left:658.2px;top:167.7px;width:137.4px;height:38.9px;background:#323232;"></div>
<div class="a" style="left:658.2px;top:167.7px;width:125.5px;height:16.8px;background:#262626;"></div>
<div class="a" style="left:783.7px;top:167.7px;width:11.9px;height:16.8px;background:#2b2b2b;"></div>
<div class="a" style="left:734.2px;top:167.7px;width:1px;height:38.9px;background:#2a2a2a;"></div>
<div class="a" style="left:783.7px;top:184.5px;width:1px;height:22px;background:#2a2a2a;"></div>
<div class="t" style="left:661.34px;top:172px;font-size:7.50px;color:#f2f2f2;font-weight:bold;transform:scaleX(0.955);">Name</div>
<div class="t" style="left:738.16px;top:172px;font-size:7.50px;color:#f2f2f2;font-weight:bold;transform:scaleX(0.897);">Type</div>
<div class="a" style="left:661.2px;top:187.1px;width:71.6px;height:16.4px;background:#2d2d2d;border:1px solid #555;border-radius:2px"></div>
<div class="t" style="left:667.37px;top:192px;font-size:7.50px;color:#8c8c8c;transform:scaleX(0.878);">parameter name</div>
<div class="a" style="left:737.6px;top:187.1px;width:43.3px;height:16.4px;background:#2d2d2d;border:1px solid #555;border-radius:2px"></div>
<div class="t" style="left:743.96px;top:192px;font-size:7.50px;color:#eeeeee;transform:scaleX(0.916);">string</div>
<svg style="left:772.6px;top:194.2px;" width="3.5" height="3"><path d="M0 0 H3.5 L1.75 3 Z" fill="#e0e0e0"/></svg>
<svg style="left:785.9px;top:191.5px;" width="7.4" height="8"><path d="M3.7 0 V8 M0 4 H7.4" stroke="#eeeeee" stroke-width="1.2"/></svg>
<div class="a" style="left:417px;top:29.9px;width:112.4px;height:65.1px;background:#1b1b1b;box-shadow:0 2px 3px rgba(0,0,0,.55)"></div>
<svg style="left:426.3px;top:38.8px;" width="10.5" height="6.7" viewBox="0 0 10.5 6.7"><path d="M2.4 6.2 H8.2 A2.1 2.1 0 0 0 8.4 2.5 A3 3 0 0 0 2.5 1.9 A2.2 2.2 0 0 0 2.4 6.2 Z" stroke="#e0e0e0" stroke-width="0.9" fill="none"/><path d="M5.3 5.6 V2.7 M4.2 3.8 L5.3 2.6 L6.4 3.8" stroke="#e0e0e0" stroke-width="0.8" fill="none"/></svg>
<div class="t" style="left:440.88px;top:39px;font-size:8.80px;color:#dddddd;transform:scaleX(0.724);">REDEPLOY</div>
<svg style="left:427.9px;top:58.4px;" width="7.3" height="8.6"><path d="M0 0 L7.3 4.3 L0 8.6 Z" fill="#cccccc"/></svg>
<div class="t" style="left:439.27px;top:59px;font-size:8.80px;color:#dddddd;transform:scaleX(0.756);">LAUNCH DEPLOYED APP</div>
<svg style="left:427.9px;top:77.4px;" width="7.3" height="9.1"><path d="M0 0 L7.3 4.55 L0 9.1 Z" fill="#cccccc"/></svg>
<div class="t" style="left:439.26px;top:78px;font-size:8.80px;color:#dddddd;transform:scaleX(0.783);">MANAGE APP</div>
<div class="a" style="left:416.4px;top:2.7px;width:90.5px;height:89.3px;border:2.2px solid #f28b2c"></div>
</body></html>
